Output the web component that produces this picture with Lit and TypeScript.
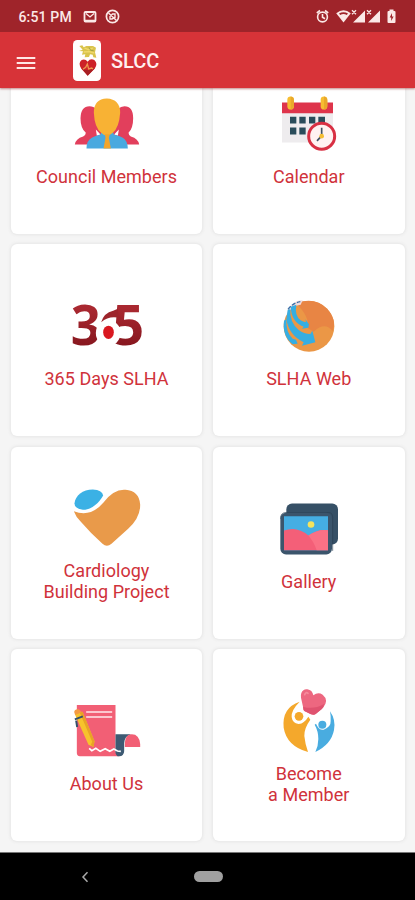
import { LitElement, html, svg, css } from "lit";
import { customElement } from "lit/decorators.js";

const council = svg`
  <path fill="#e23f5c" d="M43 177Q45 160 68 153Q76 149 76 142Q60 128 60 98Q61 62 87 62Q100 62 106 70L135 120L120 177Z"/>
  <path fill="#e23f5c" d="M236 177Q234 160 211 153Q204 149 204 142Q218 128 218 98Q218 62 192 62Q180 62 174 70L148 120L160 177Z"/>
  <path fill="#fff" d="M106 132L120 147L109 151ZM175 132L161 147L172 151Z"/>
  <path fill="#49a9df" d="M78 189Q78 165 94 157Q103 151 120 147L122 140H158L160 147Q178 151 187 157Q201 165 202 189Z"/>
  <path fill="#f8b234" d="M139 39Q179 41 179 82Q176 126 157 142Q149 150 139 150Q129 150 122 142Q102 126 100 82Q100 40 139 39Z"/>
  <path fill="#f1a52c" d="M133 146H148L145 157L151 189H129L135 157Z"/>`;

const calendar = svg`
  <path fill="#eeecee" d="M66 82H219V171H66Z"/>
  <path fill="#de344b" d="M66 51H219V83H66Z"/>
  <g fill="#f7bd31"><rect x="82" y="33" width="20" height="39" rx="10"/><rect x="182" y="33" width="20" height="39" rx="10"/></g>
  <g fill="#e9a82b"><path d="M92 33Q102 34 102 46V60Q101 72 92 72ZM192 33Q202 34 202 46V60Q201 72 192 72Z"/></g>
  <g fill="#294c5a"><path d="M90 94h19v20h-19zM118 94h19v20h-19zM147 94h19v20h-19zM175 94h20v20h-20zM90 126h19v21h-19zM118 126h19v21h-19z"/></g>
  <circle cx="185" cy="152" r="39" fill="#fff2f1" stroke="#d83043" stroke-width="9"/>
  <path d="M185 127V151L171 166" fill="none" stroke="#405263" stroke-width="5"/>
  <circle cx="185" cy="152" r="7" fill="#f5bd32"/>`;

const days = svg`
  <defs><linearGradient id="wine" x1="0" y1="0" x2="0" y2="1"><stop offset=".3" stop-color="#a92830"/><stop offset=".8" stop-color="#87171f"/></linearGradient></defs>
  <text class="numeral" y="165" fill="url(#wine)"><tspan x="31" textLength="90" lengthAdjust="spacingAndGlyphs">3</tspan><tspan x="121" textLength="34" lengthAdjust="spacingAndGlyphs" fill="#fff">6</tspan><tspan x="155" textLength="96" lengthAdjust="spacingAndGlyphs">5</tspan></text>
  <ellipse cx="143" cy="129" rx="37" ry="39" fill="#fff"/>
  <path fill="#9d252c" d="M122 97Q130 68 158 62L172 56L174 79L184 86Q148 74 122 97Z"/>
  <ellipse cx="144" cy="127" rx="16" ry="20" fill="#d91820"/>`;

const web = svg`
  <circle cx="147" cy="109" r="76" fill="#eb9746"/>
  <path fill="#e88544" d="M108 40Q165 19 202 57Q231 88 218 123Q195 94 161 125L142 113Q151 82 108 40Z"/>
  <path fill="#f3dbdc" d="M80 72Q94 31 128 31L122 44L101 49Z"/>
  <path fill="#36aee2" d="M92 50L109 44Q103 76 122 91Q131 97 138 96L136 88L147 103L145 113L126 116L131 110Q94 96 92 50Z"/>
  <path fill="#36aee2" d="M83 60L91 57Q88 96 116 120Q132 132 151 132L157 122L166 157L126 167L131 157Q87 136 79 88Z"/>
  <path fill="#36aee2" d="M72 92L79 88Q77 127 98 146L108 149L113 161L98 163Q66 137 72 92Z"/>
  <path d="M84 58Q98 39 121 35" fill="none" stroke="#396ea7" stroke-width="4" stroke-dasharray="12 5"/>`;

const heart = svg`
  <path fill="#3bb1e5" d="M132 69C134 45 157 27 187 27Q215 28 218 45C207 65 184 89 157 88Q132 84 132 69Z"/>
  <path fill="#e99a4a" d="M130 92Q180 112 219 66Q250 25 285 28Q326 31 329 72Q330 111 293 145L243 190Q229 202 216 190Q181 159 151 124Q136 109 130 92Z"/>`;

const gallery = svg`
  <rect x="79" y="39" width="155" height="123" rx="17" fill="#365066"/>
  <path d="M62 85Q61 66 79 66H205Q218 66 218 80V181" fill="none" stroke="#2b4053" stroke-width="2"/>
  <rect x="61" y="67" width="155" height="125" rx="17" fill="#3b556c"/>
  <path fill="#45aee3" d="M72 77H204V179H72Z"/>
  <path fill="#f45f78" d="M72 120Q112 106 145 135Q173 115 204 119V179H72Z"/>
  <path fill="#fa7185" d="M145 135Q173 115 204 119V179H170Q160 151 145 135Z"/>
  <circle cx="153" cy="102" r="10" fill="#f5e35c"/>`;

const about = svg`
  <path fill="#f25f75" d="M49 30H165V171L177 184H58Q49 183 49 174Z"/>
  <path fill="#3d5a73" d="M165 118H212Q192 123 191 145V169Q190 184 176 184H171Q163 176 165 165Z"/>
  <path fill="#f25f75" d="M193 156Q191 118 214 118Q236 118 239 147V156Z"/>
  <path d="M77 51H155M77 66H155" stroke="#ffe9ec" stroke-width="5"/>
  <path d="M86 160L94 167L106 160L119 169L134 161L148 169L160 162L171 168L181 169" fill="none" stroke="#fff" stroke-width="5"/>
  <path fill="#f7c22c" d="M43 58L66 50L102 139L99 156L84 149Z"/>
  <path fill="#e8a326" d="M58 53L66 50L102 139L99 156L91 150L95 140Z"/>
  <path fill="#f49b42" d="M41 51Q43 41 54 43L64 51L44 60Z"/>
  <path d="M43 73L67 64M47 77L50 96" fill="none" stroke="#34516a" stroke-width="6"/>`;

const member = svg`
  <path fill="#f4a82c" d="M119 65Q65 83 71 143Q80 198 144 216Q135 190 133 168Q132 145 151 119L145 110Q133 130 116 132Q97 129 95 111Q93 91 119 65Z"/>
  <circle cx="117" cy="109" r="13" fill="#f4a82c"/>
  <path fill="#49ace0" d="M210 94Q228 120 222 150Q214 193 166 216Q175 197 175 177Q175 153 164 134L168 131Q176 151 191 149Q213 141 212 123Q213 109 210 94Z"/>
  <circle cx="187" cy="134" r="12" fill="#49ace0"/>
  <path fill="#ed6780" d="M124 39Q130 26 142 28Q157 30 160 46Q174 35 188 44Q207 60 190 82L168 101Q163 106 153 103L133 93Q130 90 129 80L123 53Q122 44 124 39Z"/>
  <path fill="#df526f" d="M129 80Q160 90 192 72Q192 80 186 87L168 101Q163 106 153 103L133 93Q130 90 129 80Z"/>
  <path d="M134 44Q138 34 144 40" fill="none" stroke="#f58a9b" stroke-width="5" stroke-linecap="round"/>`;

const tiles = [
  { label: ["Council Members"], box: "-10.5 -40.5 300 240", art: council },
  { label: ["Calendar"], box: "-3 -40.5 300 240", art: calendar },
  { label: ["365 Days SLHA"], box: "-10.5 -48 300 240", art: days },
  { label: ["SLHA Web"], box: "-3 -48 300 240", art: web },
  { label: ["Cardiology", "Building Project"], box: "79.5 -10.5 300 240", art: heart },
  { label: ["Gallery"], box: "-3 -40.5 300 240", art: gallery },
  { label: ["About Us"], box: "-10.5 -48 300 240", art: about },
  { label: ["Become", "a Member"], box: "-3 -3 300 240", art: member },
];

@customElement("app-root")
export class AppRoot extends LitElement {
  static styles = css`
    :host { display: flex; flex-direction: column; width: 415px; height: 900px; overflow: hidden; background: #f5f5f5; font-family: Roboto, sans-serif; }
    .status { height: 32px; flex: none; box-sizing: border-box; display: flex; align-items: center; background: #9f242a; color: #fbe9e7; padding: 1px 18px 0 18.5px; }
    .time { font-size: 14px; font-weight: 500; letter-spacing: .15px; width: 64px; white-space: nowrap; }
    .notif { width: 38px; height: 16px; }
    .system { width: 82px; height: 16px; margin-left: auto; }
    .bar { height: 56px; flex: none; display: flex; align-items: center; background: #d73338; box-shadow: 0 1px 2px #9b3c3c99; z-index: 1; padding: 0 16px; box-sizing: border-box; }
    .menu { width: 20px; height: 16px; margin-top: 5px; }
    .logo { width: 28px; height: 41px; margin: 1px 0 0 37px; }
    .title { color: #fff0ef; font-size: 20px; font-weight: 500; margin: 2px 0 0 10px; letter-spacing: 0; }
    .view { flex: 1; min-height: 0; overflow: hidden; display: flex; flex-direction: column; justify-content: flex-end; }
    .grid { flex: none; display: grid; grid-template-columns: 191px 191.5px; grid-auto-rows: 192px; gap: 10.5px 11px; padding: 0 10.5px 11px 11px; }
    .card { background: #fff; border-radius: 6px; box-shadow: 0 0 3px 1px #e6e6e6; display: flex; flex-direction: column; align-items: center; }
    .art { width: 100px; height: 80px; margin-top: 30px; flex: none; overflow: visible; }
    .label { height: 49px; display: flex; flex-direction: column; align-items: center; justify-content: center; color: #d0323b; font-size: 18px; line-height: 21px; letter-spacing: .03px; white-space: nowrap; }
    .numeral { font-family: "Open Sans", sans-serif; font-weight: 700; font-size: 165px; }
    .nav { height: 48px; flex: none; background: #000; border-top: 1px solid #777; box-sizing: border-box; display: flex; align-items: center; padding-left: 81px; }
    .back { width: 8px; height: 12px; }
    .home { width: 29px; height: 11px; border-radius: 6px; background: #a0a0a0; margin: 0 0 1px 104.5px; }
  `;

  render() {
    return html`
      <div class="status">
        <span class="time">6:51 PM</span>
        <svg class="notif" viewBox="0 0 38 16" fill="none" stroke="#fbe9e7">
          <rect x="1.5" y="3" width="11" height="9.5" rx="1" stroke-width="1.8"/><path d="M3 4.5L7 8L11 4.5M2 11.5H12" stroke-width="1.3"/>
          <circle cx="29.5" cy="7.5" r="6.1" stroke-width="1.7"/><path d="M25.5 4L33.5 11.5M27 10V7.5L29.5 5H32V8.5L29 10Z" stroke-width="1.4"/>
        </svg>
        <svg class="system" viewBox="315 9 82 16" fill="#fbe9e7">
          <g fill="none" stroke="#fbe9e7" stroke-width="1.6"><circle cx="322.5" cy="17" r="4.9"/><path d="M322.5 14V17.3L325 18.8M316.8 13L320 10.5M328.2 13L325 10.5"/></g>
          <path d="M336.2 13.3Q343.5 7 350.8 13.3L343.5 22.5Z"/><path d="M339 13.6Q343.5 11 348 13.6L346.8 15Q343.5 13.2 340.2 15Z" fill="#9f242a"/>
          <path d="M365 10.5V22.5H353ZM380 10.5V22.5H368Z"/>
          <path d="M352 10.3L356 14.3M356 10.3L352 14.3M367 10.3L371 14.3M371 10.3L367 14.3" stroke="#fbe9e7" stroke-width="1.3"/>
          <rect x="387.5" y="11" width="8" height="12" rx="1"/><rect x="389.5" y="9.5" width="4" height="3"/>
          <path d="M392 13L389.7 17.6H391.2V21L393.6 16.5H392Z" fill="#9f242a"/>
        </svg>
      </div>
      <header class="bar">
        <svg class="menu" viewBox="0 0 20 16"><path d="M.7 3H19.3M.7 8H19.3M.7 13H19.3" stroke="#ffe7e6" stroke-width="1.8"/></svg>
        <svg class="logo" viewBox="0 0 84 123">
          <rect width="84" height="123" rx="13" fill="#fffefd"/>
          <path fill="#d9c34b" d="M19 18L28 16L32 22L40 18L60 18L69 23L66 37L70 53L61 52L59 44L51 43L48 51L35 52L37 43L27 44L30 34L18 33L29 29Z"/>
          <path d="M34 24L47 29L60 24M32 36L49 35L64 39" fill="none" stroke="#f0d96b" stroke-width="4"/>
          <path d="M48 22L53 31L62 32" fill="none" stroke="#a5a443" stroke-width="3"/>
          <path fill="#cd2228" d="M44 65Q52 54 64 60Q76 71 65 86L44 107L25 86Q14 69 26 60Q37 56 44 65Z"/>
          <path fill="#a71e21" d="M25 84L44 107L66 84L52 90L37 90Z"/>
          <path d="M30 88L38 82L43 72L47 87L56 84L60 87" fill="none" stroke="#ee974f" stroke-width="4"/>
        </svg>
        <span class="title">SLCC</span>
      </header>
      <main class="view">
        <div class="grid">
          ${tiles.map((t) => html`
            <div class="card">
              <svg class="art" viewBox=${t.box}>${t.art}</svg>
              <div class="label">${t.label.map((line) => html`<span>${line}</span>`)}</div>
            </div>`)}
        </div>
      </main>
      <nav class="nav">
        <svg class="back" viewBox="0 0 8 12"><path d="M6.5 1.3L2 6L6.5 10.7" fill="none" stroke="#aaa" stroke-width="1.5"/></svg>
        <div class="home"></div>
      </nav>`;
  }
}
